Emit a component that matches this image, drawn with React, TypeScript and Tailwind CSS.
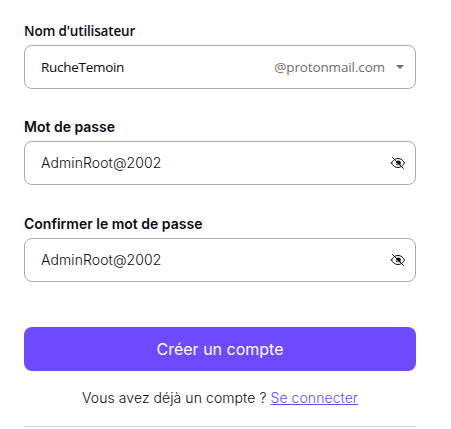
import React from 'react';

function EyeSlash() {
  return (
    <svg width="16" height="16" viewBox="0 0 16 16" fill="none" stroke="#0c0c14" strokeLinecap="round" className="shrink-0">
      <path d="M1.500 8C2.800 5.300 5 3.500 8 3.500s5.200 1.800 6.500 4.500c-1.300 2.700-3.500 4.500-6.500 4.500S2.800 10.700 1.500 8Z" strokeWidth="1" />
      <circle cx="8.300" cy="7.900" r="2.500" fill="#0c0c14" stroke="none" />
      <path d="M5.200 6.900l4 4" stroke="#fff" strokeWidth="0.900" strokeLinecap="butt" />
      <path d="M2.500 2.500l11 11" strokeWidth="1" />
    </svg>
  );
}

function PasswordField({ label }: { label: string }) {
  return (
    <div className="flex flex-col">
      <label className="h-5 text-[14px] leading-5 font-semibold">{label}</label>
      <div className="mt-1 flex h-11 items-center justify-between rounded-lg border border-[#adaba8] pl-4 pr-[9px] text-[14px]">
        <span className="pb-px font-[350] tracking-[0.1px]">AdminRoot@2002</span>
        <EyeSlash />
      </div>
    </div>
  );
}

export default function App() {
  return (
    <main className="h-[429px] w-[451px] overflow-hidden bg-white pl-6 pr-[35px] pt-[21px] font-['Inter',sans-serif] text-[#0c0c14]">
      <div className="flex flex-col font-['Open_Sans',sans-serif]">
        <label className="h-5 text-[13.5px] leading-5 font-semibold tracking-[-0.17px]">Nom d'utilisateur</label>
        <div className="mt-1 flex h-11 items-center rounded-lg border border-[#adaba8] pl-4 pr-[11px] text-[13.5px] leading-5">
          <span className="tracking-[-0.29px]">RucheTemoin</span>
          <span className="ml-auto tracking-[-0.13px] text-[#706d6b]">@protonmail.com</span>
          <svg className="ml-[11px]" width="8" height="4" viewBox="0 0 8 4"><path d="M0 0h8L4 4z" fill="#706d6b" /></svg>
        </div>
      </div>
      <div className="mt-7"><PasswordField label="Mot de passe" /></div>
      <div className="mt-[29px]"><PasswordField label="Confirmer le mot de passe" /></div>
      <button className="mt-[45px] block h-11 w-full rounded-lg bg-[#6d4aff] text-[16px] text-white">Créer un compte</button>
      <p className="mt-[17px] text-center text-[14px] leading-5 font-[350] tracking-[0.07px]">
        Vous avez déjà un compte ? <a className="text-[#6d4aff] underline">Se connecter</a>
      </p>
      <hr className="mt-[18px] border-[#d1cfcd]" />
    </main>
  );
}
